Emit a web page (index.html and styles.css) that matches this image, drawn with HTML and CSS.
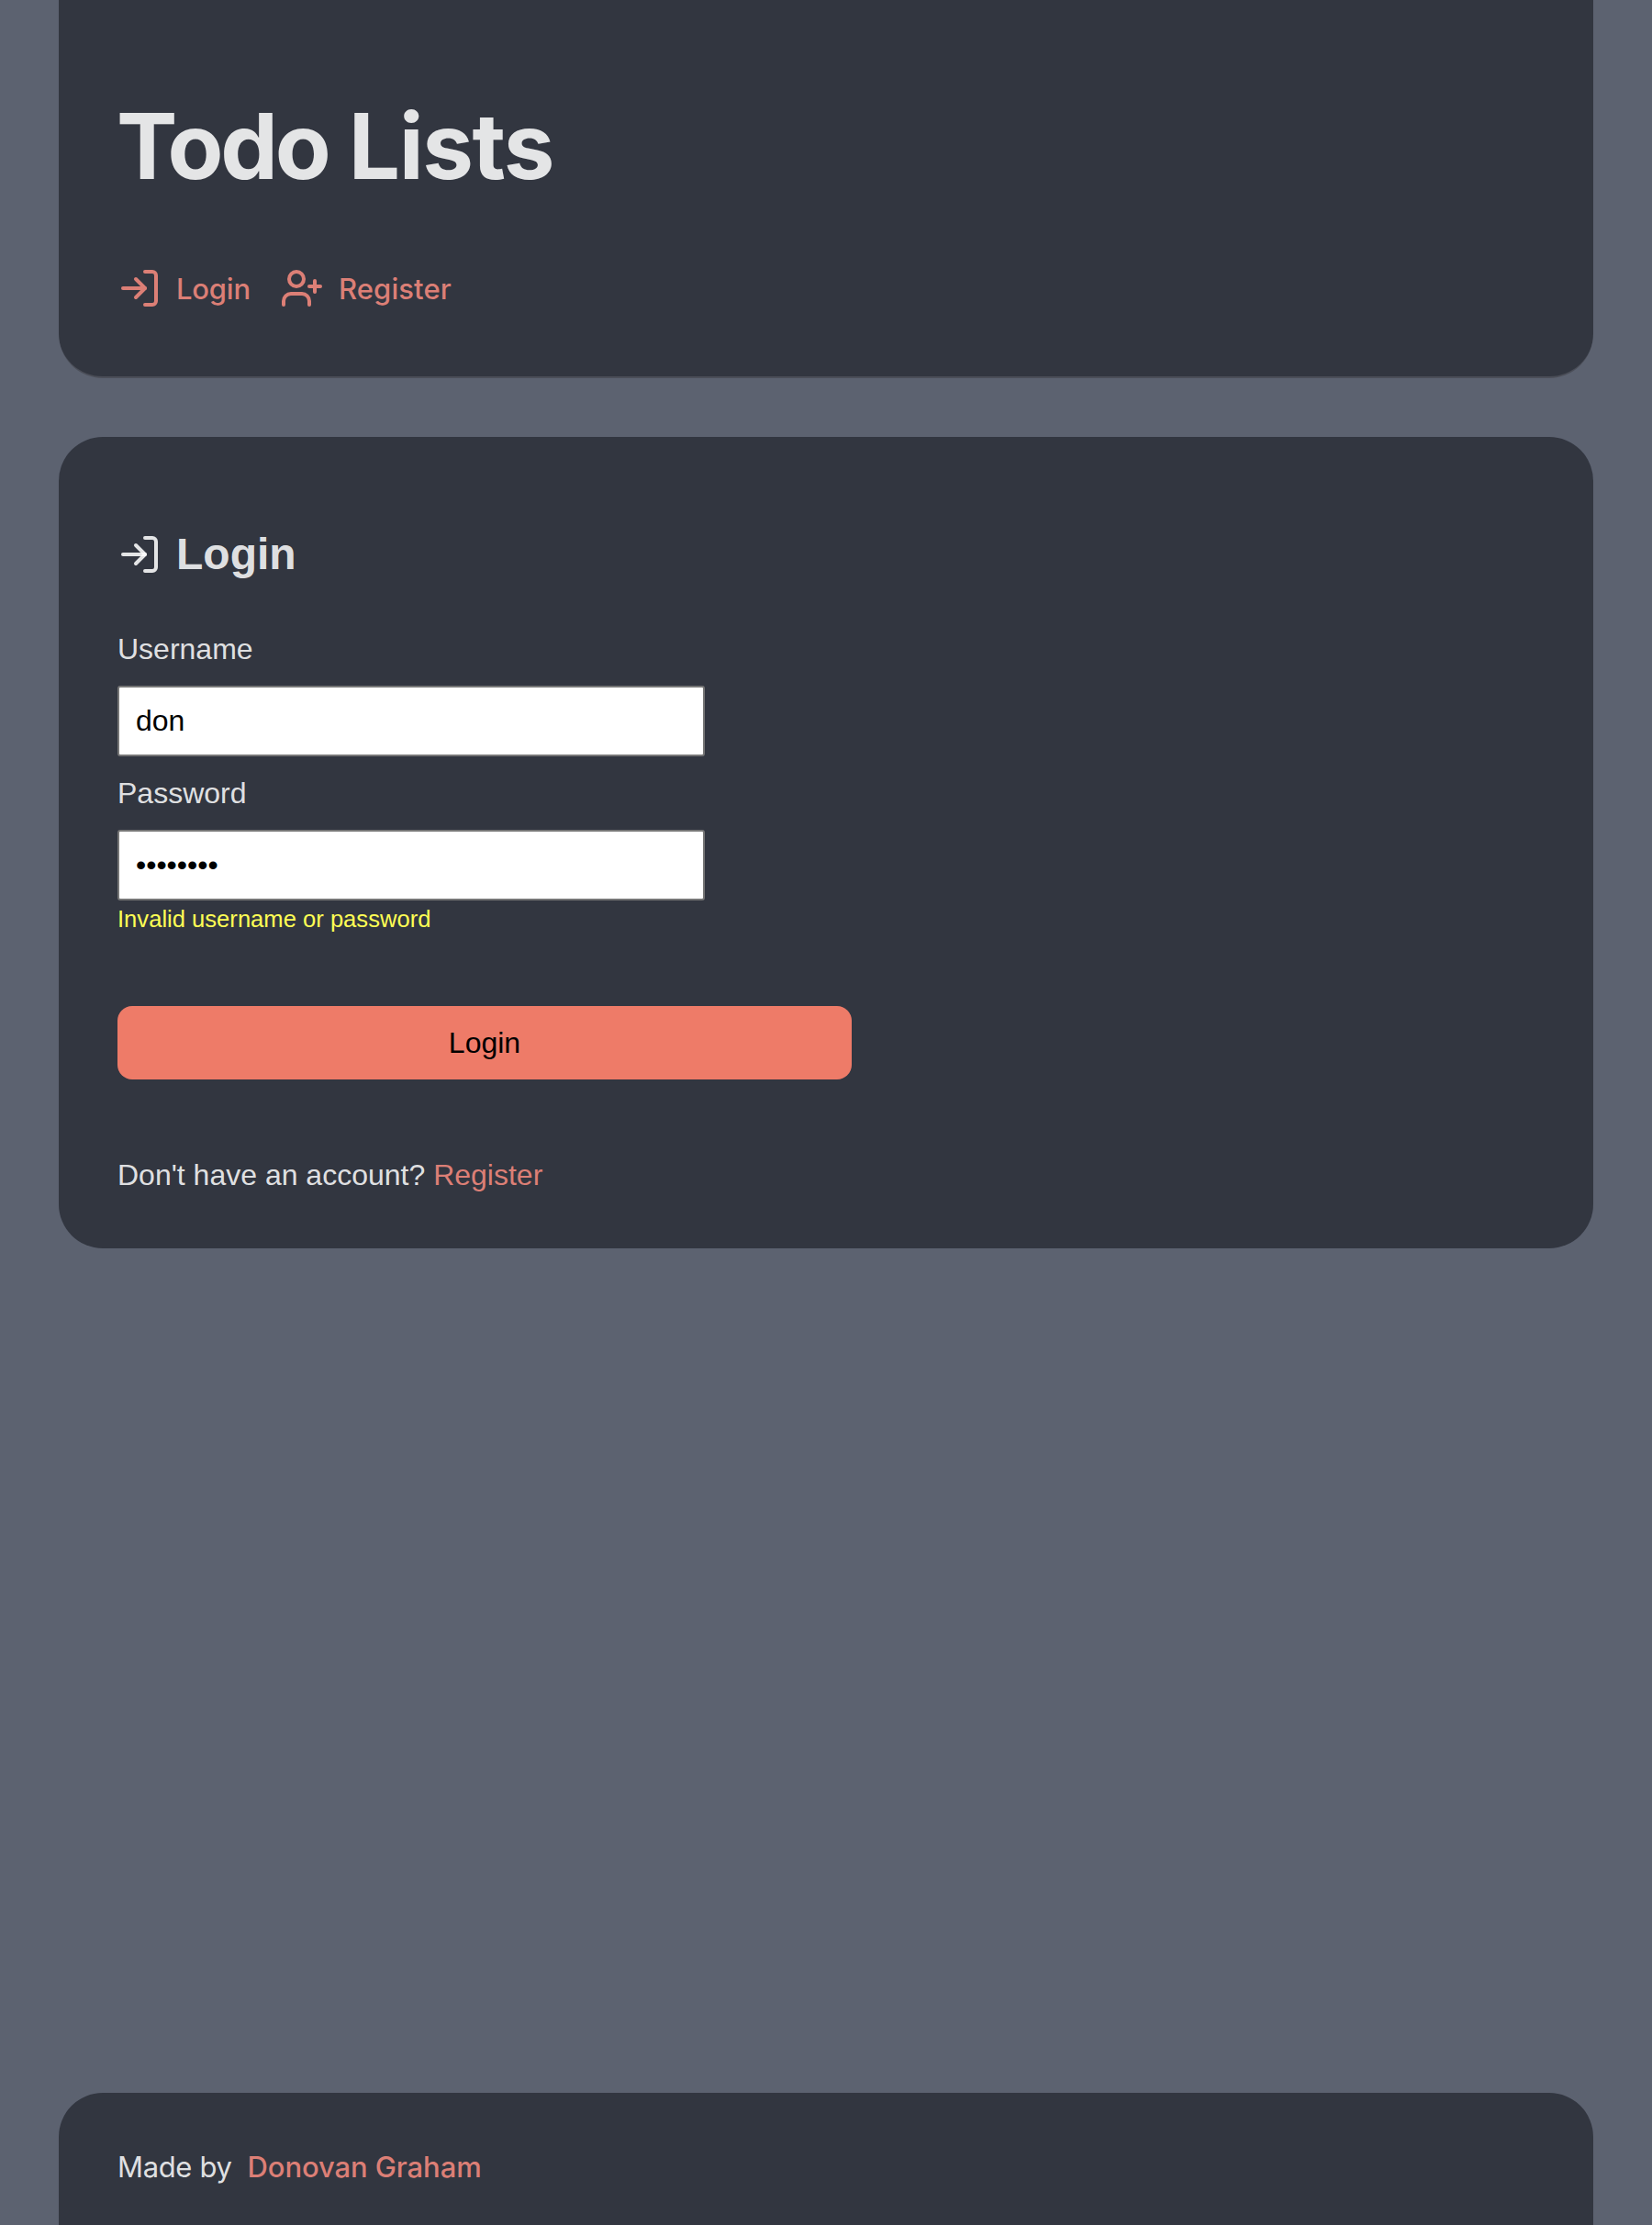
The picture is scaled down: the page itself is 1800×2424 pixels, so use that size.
FILE: index.html
```html
<!DOCTYPE html>
<html lang="en">
<head>
<meta charset="utf-8">
<title>Todo Lists</title>
<link rel="stylesheet" href="styles.css">
</head>
<body>
<header class="header">
  <h1 class="title"><span class="title-lead">Todo</span> Lists</h1>
  <nav class="nav">
    <a class="nav-link" href="#"><svg class="icon" viewBox="0 0 24 24"><path d="M15 3h4a2 2 0 0 1 2 2v14a2 2 0 0 1-2 2h-4"/><path d="m10 17 5-5-5-5"/><path d="M15 12H3"/></svg><span class="login-text">Login</span></a>
    <a class="nav-link" href="#"><svg class="icon" viewBox="0 0 24 24"><path d="M16 21v-2a4 4 0 0 0-4-4H6a4 4 0 0 0-4 4v2"/><circle cx="9" cy="7" r="4"/><path d="M19 8v6"/><path d="M22 11h-6"/></svg><span class="register-text">Register</span></a>
  </nav>
</header>
<main class="main">
  <h2 class="heading"><svg class="icon" viewBox="0 0 24 24"><path d="M15 3h4a2 2 0 0 1 2 2v14a2 2 0 0 1-2 2h-4"/><path d="m10 17 5-5-5-5"/><path d="M15 12H3"/></svg><span>Login</span></h2>
  <form class="form">
    <label class="label" for="username">Username</label>
    <input class="input" id="username" type="text" value="don">
    <label class="label" for="password">Password</label>
    <input class="input" id="password" type="password" value="password">
    <p class="error">Invalid username or password</p>
    <button class="button" type="button">Login</button>
  </form>
  <p class="prompt">Don't have an account? <a class="link" href="#">Register</a></p>
</main>
<footer class="footer"><span class="made-by">Made by</span><a class="author" href="#">Donovan Graham</a></footer>
</body>
</html>
```
FILE: styles.css
```css
* { box-sizing: border-box; }
body {
  margin: 0;
  min-height: 2424px;
  padding: 0 64px;
  display: flex;
  flex-direction: column;
  background: #5c6270;
  color: rgba(255, 255, 255, 0.87);
  font: 32px/40px "Liberation Sans", Arial, sans-serif;
}
h1, h2, p { margin: 0; }
a { color: #dc7f76; text-decoration: none; }
.header, .main, .footer { background: #323640; }
.header {
  height: 412px;
  padding: 99px 64px 0;
  border-bottom: 2px solid #4b4e58;
  border-radius: 0 0 48px 48px;
  font-family: Inter, sans-serif;
}
.title { margin-left: -1px; font-size: 99.5px; line-height: 120px; font-weight: 700; letter-spacing: -1.4px; }
.title-lead { letter-spacing: -3.2px; }
.nav { display: flex; gap: 32px; margin-top: 71px; }
.nav-link { display: flex; align-items: center; gap: 16px; height: 48px; font-size: 31px; line-height: 48px; font-weight: 450; }
.login-text { width: 81px; padding-top: 2px; letter-spacing: -0.2px; }
.register-text { padding-top: 2px; letter-spacing: 0.1px; }
.icon {
  width: 48px;
  height: 48px;
  flex: none;
  fill: none;
  stroke: currentColor;
  stroke-width: 2;
  stroke-linecap: round;
  stroke-linejoin: round;
}
.main { height: 884px; margin-top: 64px; padding: 100px 64px 0; border-radius: 48px; }
.heading { display: flex; align-items: center; gap: 16px; font-size: 48px; line-height: 56px; }
.form { display: flex; flex-direction: column; align-items: flex-start; margin-top: 55px; }
.label { margin-bottom: 20px; }
.input {
  width: 640px;
  height: 77px;
  margin: 0 0 20px;
  padding: 0 18px;
  border: 2px solid #767676;
  border-radius: 3px;
  background: #fff;
  color: #000;
  font: inherit;
}
.error { margin-top: -16px; color: #ffff54; font-size: 25.6px; line-height: 32px; }
.button {
  width: 800px;
  height: 80px;
  margin: 79px 0 0;
  border: 0;
  border-radius: 16px;
  background: #ee7b68;
  color: #000;
  font: inherit;
}
.prompt { margin-top: 84px; }
.footer {
  height: 144px;
  margin-top: auto;
  padding: 57px 64px 0;
  display: flex;
  gap: 17px;
  border-radius: 48px 48px 0 0;
  font: 31px/48px Inter, sans-serif;
}
.made-by { letter-spacing: -0.35px; }
.author { font-weight: 450; letter-spacing: -0.1px; }
```
